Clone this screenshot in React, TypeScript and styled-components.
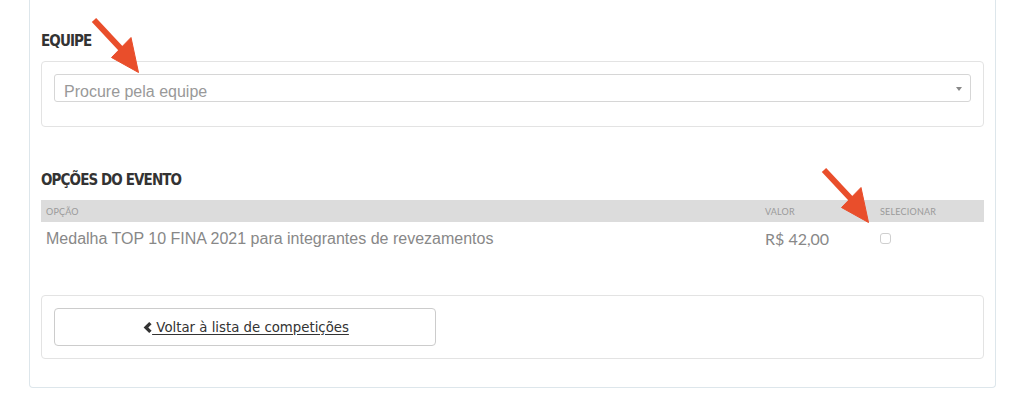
import React from 'react';
import styled, { createGlobalStyle } from 'styled-components';

const GlobalStyle = createGlobalStyle`
  html, body { margin: 0; padding: 0; background: #ffffff; }
  body { font-family: "Liberation Sans", Arial, sans-serif; }
  * { box-sizing: border-box; }
`;

const Page = styled.div`
  position: relative;
  width: 1024px;
  height: 405px;
  padding: 0 28px 0 29px;
  overflow: hidden;
`;

const Panel = styled.div`
  border: 1px solid #dde6eb;
  border-top: none;
  border-radius: 0 0 4px 4px;
  padding: 31px 11px 28px;
`;

const Heading = styled.h3`
  margin: 0 0 10px;
  font-family: "Liberation Sans Narrow", "DejaVu Sans Condensed", "Roboto", sans-serif;
  font-stretch: condensed;
  font-weight: 700;
  font-size: 15px;
  line-height: 20px;
  letter-spacing: -0.9px;
  color: #333333;
  text-transform: uppercase;
`;

const Well = styled.div<{ $pb?: number; $mb?: number }>`
  border: 1px solid #e3e3e3;
  border-radius: 4px;
  padding: 12px 12px ${p => p.$pb ?? 12}px;
  margin-bottom: ${p => p.$mb ?? 0}px;
`;

const Select = styled.div`
  display: flex;
  align-items: center;
  justify-content: space-between;
  height: 28px;
  padding: 0 8px 0 9px;
  border: 1px solid #d6d6d6;
  border-radius: 3px;
  background: #ffffff;
`;

const Placeholder = styled.span`
  padding-top: 7px;
  font-size: 16px;
  color: #999999;
`;

const Caret = styled.span`
  width: 0;
  height: 0;
  border-left: 3px solid transparent;
  border-right: 3px solid transparent;
  border-top: 4px solid #888888;
  margin-top: 1px;
`;

const Table = styled.div`
  margin-bottom: 40px;
`;

const Grid = styled.div`
  display: grid;
  grid-template-columns: 719px 115px 1fr;
  align-items: center;
`;

const HeadRow = styled(Grid)`
  height: 22px;
  background: #dcdcdc;
`;

const HeadCell = styled.div`
  padding-left: 5px;
  font-family: Lato, "Open Sans", sans-serif;
  font-size: 9px;
  color: #9a9a9a;
  text-transform: uppercase;
  letter-spacing: 0.2px;
`;

const BodyRow = styled(Grid)`
  height: 33px;
`;

const Cell = styled.div<{ $font?: string }>`
  padding-left: 5px;
  font-family: ${p => p.$font ?? '"Liberation Sans", Arial, sans-serif'};
  font-size: 16px;
  color: #888888;
`;

const Checkbox = styled.span`
  display: block;
  width: 11px;
  height: 11px;
  border: 1px solid #cfcfcf;
  border-radius: 3px;
  background: #ffffff;
  margin-left: 5px;
`;

const BackButton = styled.button`
  display: flex;
  align-items: center;
  justify-content: center;
  width: 382px;
  height: 38px;
  padding: 0 0 0 2px;
  border: 1px solid #cccccc;
  border-radius: 4px;
  background: #ffffff;
  color: #333333;
  font-family: "DejaVu Sans", Verdana, sans-serif;
  font-size: 13.3px;
  cursor: pointer;
`;

const ButtonLabel = styled.span`
  white-space: pre;
  text-decoration: underline;
  text-underline-offset: 2px;
`;

const Overlay = styled.svg`
  position: absolute;
  top: 0;
  left: 0;
  pointer-events: none;
`;

const ChevronLeft = () => (
  <svg width="9" height="11" viewBox="0 0 9 11">
    <path d="M6.2 0 L8.6 2.3 L5.3 5.5 L8.6 8.7 L6.2 11 L0.6 5.5 Z" fill="#333333" />
  </svg>
);

const Arrow = ({ dx, dy }: { dx: number; dy: number }) => (
  <g transform={`translate(${dx} ${dy})`} fill="#e94e2b" stroke="#e94e2b">
    <line x1="94" y1="20" x2="123" y2="51" strokeWidth="6" />
    <polygon points="111.5,57.5 131,37.5 138.5,72.5" strokeWidth="1" strokeLinejoin="round" />
  </g>
);

export default function App() {
  return (
    <>
      <GlobalStyle />
      <Page>
        <Panel>
          <Heading>Equipe</Heading>
          <Well $pb={24} $mb={43}>
            <Select>
              <Placeholder>Procure pela equipe</Placeholder>
              <Caret />
            </Select>
          </Well>

          <Heading>Opções do evento</Heading>
          <Table>
            <HeadRow>
              <HeadCell>Opção</HeadCell>
              <HeadCell>Valor</HeadCell>
              <HeadCell>Selecionar</HeadCell>
            </HeadRow>
            <BodyRow>
              <Cell>Medalha TOP 10 FINA 2021 para integrantes de revezamentos</Cell>
              <Cell $font='Lato, "Open Sans", sans-serif'>R$ 42,00</Cell>
              <Checkbox />
            </BodyRow>
          </Table>

          <Well>
            <BackButton>
              <ChevronLeft />
              <ButtonLabel>{' Voltar à lista de competições'}</ButtonLabel>
            </BackButton>
          </Well>
        </Panel>

        <Overlay width="1024" height="405">
          <Arrow dx={0} dy={0} />
          <Arrow dx={730} dy={150} />
        </Overlay>
      </Page>
    </>
  );
}
